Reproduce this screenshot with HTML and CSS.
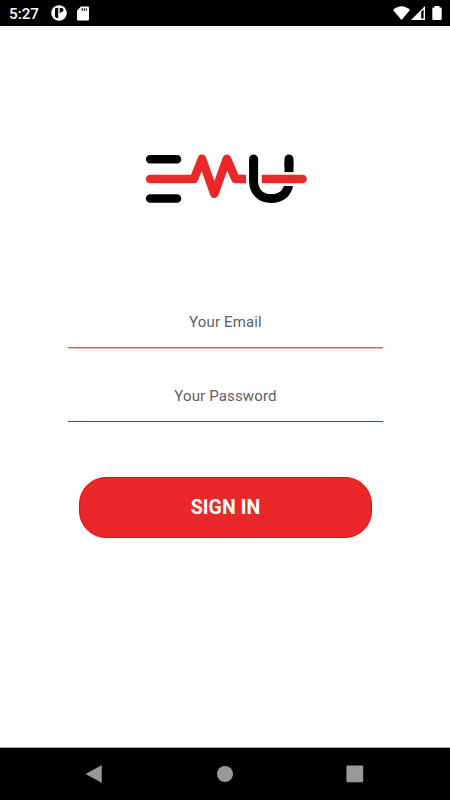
FILE: index.html
```html
<!DOCTYPE html>
<html lang="en">
<head>
<meta charset="utf-8">
<title>EMU Sign In</title>
<link rel="stylesheet" href="styles.css">
</head>
<body>
<header class="status">
  <span class="time">5:27</span>
  <svg class="app-icon" width="16" height="16" viewBox="0 0 16 16"><circle cx="8" cy="8" r="7.8" fill="#fff"/><path d="M4 3.500Q5 2.800 7.200 2.800V13H5.500Q4 12.500 4 11ZM8.700 3H10.500A2 2 0 0 1 10.500 7H9.500V8.300H8.700Z" fill="#000"/></svg>
  <svg class="sd-icon" width="12" height="15" viewBox="0 0 12 15"><path d="M4 .5H10.8Q12 .5 12 1.700V13.300Q12 14.500 10.800 14.500H1.200Q0 14.500 0 13.300V4.500Z" fill="#fff"/><path d="M5.200 2.300V4.700M7.300 2.300V4.700M9.400 2.300V4.700" stroke="#000" stroke-width="1.100"/></svg>
  <svg class="signals" width="50" height="16" viewBox="0 0 50 16"><path d="M0 4Q8.500-3.500 17 4L8.500 14Z" fill="#fff"/><path d="M32 0V14H18Z" fill="#fff"/><path d="M28.200 5.500L30.600 3.500V12.500H28.200Z" fill="#000"/><path d="M41.500 0H46.500V1.500H47.500Q48.700 1.500 48.700 2.500V13Q48.700 14 47.500 14H40.500Q39.300 14 39.300 13V2.500Q39.300 1.500 40.500 1.500H41.500Z" fill="#fff"/></svg>
</header>
<main class="screen">
  <svg class="logo" width="162" height="50" viewBox="146 154 162 50" role="img" aria-label="EMU">
    <g fill="none" stroke-width="8.600" stroke-linecap="round" stroke-linejoin="round">
      <path d="M150.200 159.200H177M150.200 198.500H177" stroke="#000"/>
      <path d="M150.200 179H194L201.900 158.800L214.300 193.800L226.900 158.800L235.500 179H241" stroke="#ea2829"/>
      <path d="M240 179H246" stroke="#ea2829" stroke-linecap="butt"/>
      <path d="M253.600 159V181C253.600 192 261 198.500 271 198.500C281 198.500 287.500 193.500 288.800 184" stroke="#000" stroke-width="9" stroke-linecap="butt"/>
      <path d="M253.600 159V165M289 159V165" stroke="#000" stroke-width="9"/>
      <path d="M289 163V172.300" stroke="#000" stroke-width="9" stroke-linecap="butt"/>
      <path d="M260 172.300H296V186H260Z" fill="#fff" stroke="none"/>
      <path d="M261.800 179H295" stroke="#ea2829" stroke-linecap="butt"/>
      <path d="M294 179H302.500" stroke="#ea2829"/>
    </g>
  </svg>
  <form class="form">
    <input class="field email" type="email" placeholder="Your Email" aria-label="Your Email">
    <input class="field password" type="password" placeholder="Your Password" aria-label="Your Password">
    <button class="sign-in" type="button">SIGN IN</button>
  </form>
</main>
<nav class="nav">
  <svg width="18" height="18" viewBox="0 0 18 18"><path d="M1 9L16.500 .5V17.500Z" fill="#999" stroke="#999" stroke-width=".5" stroke-linejoin="round"/></svg>
  <svg width="18" height="18" viewBox="0 0 18 18"><circle cx="9" cy="9" r="8" fill="#999"/></svg>
  <svg width="18" height="18" viewBox="0 0 18 18"><rect x=".4" y=".5" width="16.800" height="16.800" rx="1" fill="#999"/></svg>
</nav>
</body>
</html>
```
FILE: styles.css
```css
* { box-sizing: border-box; }
body {
  margin: 0;
  height: 800px;
  display: flex;
  flex-direction: column;
  background: #fff;
  font-family: Roboto, sans-serif;
}
.status {
  height: 26px;
  background: #000;
  color: #fff;
  display: flex;
  align-items: center;
  padding: 0 7px 0 9px;
}
.time { width: 42px; font-size: 15.2px; font-weight: 500; line-height: 26px; padding-top: 2px; }
.sd-icon { margin-left: 10px; }
.signals { margin: 2px 0 0 auto; }
.screen {
  flex: 1;
  display: flex;
  flex-direction: column;
  align-items: center;
}
.logo { display: block; margin: 128px 0 0 3px; }
.form {
  width: 315px;
  margin: 91px 0 0 1px;
  display: flex;
  flex-direction: column;
  align-items: center;
}
.field {
  width: 315px;
  height: 53px;
  padding: 1px 0 0;
  border: 0;
  border-bottom: 1px solid #f05050;
  border-radius: 0;
  background: none;
  outline: 0;
  text-align: center;
  font: 400 15px Roboto, sans-serif;
  letter-spacing: .15px;
}
.field::placeholder { color: #606060; opacity: 1; }
.email { box-shadow: 0 1px #f9b5b5; }
.password { margin-top: 21px; border-bottom-color: #e60a0e; }
.sign-in {
  width: 293px;
  height: 61px;
  margin-top: 55px;
  border: 1px solid #e60a0e;
  border-radius: 27px;
  background: #ea2829;
  color: #fff;
  font: 700 19.5px Roboto, sans-serif;
  letter-spacing: .05px;
  padding: 0;
}
.nav {
  height: 53px;
  background: #000;
  border-top: 1px solid #aaa;
  display: flex;
  justify-content: space-between;
  align-items: center;
  padding: 0 86px 0 85px;
}
```
